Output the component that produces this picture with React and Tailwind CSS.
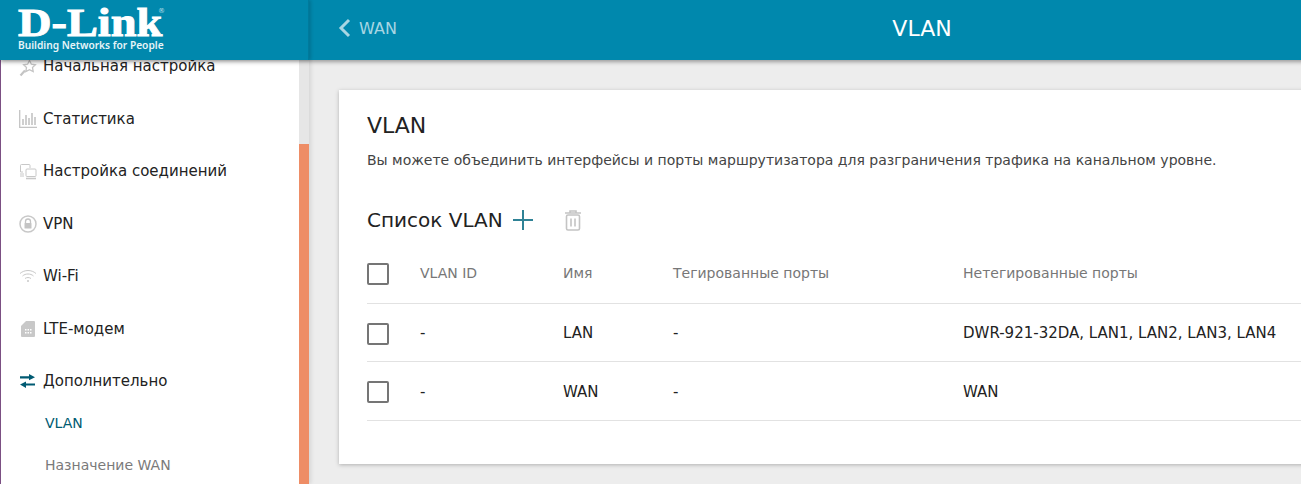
import React from 'react';

const font = { fontFamily: '"DejaVu Sans", sans-serif' };

const StarIcon = () => (
  <svg width="18" height="18" viewBox="0 -2 18 18" fill="none" stroke="#c4c4c4" strokeWidth="1.3" overflow="visible">
    <path d="M10.5 1.5l1.9 3.700 4 .6-2.900 2.800.7 4-3.700-1.900-3.700 1.900.7-4-2.900-2.800 4-.6z" />
    <path d="M6 11.500L1.500 16.500" strokeWidth="2.2" />
  </svg>
);

const StatsIcon = () => (
  <svg width="18" height="18" viewBox="0 0 18 18" fill="none" stroke="#c4c4c4">
    <path d="M.7 0v17.300H18" strokeWidth="1.3" />
    <path d="M4 15V9M7 15V5M10 15V8M13 15V3M16 15V7" strokeWidth="1.6" />
  </svg>
);

const ConnIcon = () => (
  <svg width="18" height="18" viewBox="0 0 18 18" fill="none" stroke="#c8c8c8" strokeWidth="1">
    <path d="M4 10H1.500V3.500a1 1 0 0 1 1-1H10a1 1 0 0 1 1 1V6" />
    <path d="M1 12h4M1 14h4" />
    <rect x="7" y="7" width="10" height="7.500" rx="1" />
    <path d="M7 16.500h10" strokeWidth="1.6" />
  </svg>
);

const VpnIcon = () => (
  <svg width="18" height="18" viewBox="0 0 18 18" fill="none">
    <circle cx="9" cy="9" r="8" stroke="#c8c8c8" strokeWidth="1.5" />
    <path d="M6.500 8V6.500a2.500 2.500 0 0 1 5 0V8" stroke="#c4c4c4" strokeWidth="1.3" />
    <rect x="5.500" y="8" width="7" height="5.500" rx=".6" fill="#c4c4c4" />
  </svg>
);

const WifiIcon = () => (
  <svg width="18" height="14" viewBox="0 0 18 14" fill="none" stroke="#c8c8c8" strokeWidth="1">
    <path d="M1 4.500c4.500-4 11.500-4 16 0" />
    <path d="M3.500 7c3-2.700 8-2.700 11 0" />
    <path d="M6 9.500c1.700-1.300 4.300-1.300 6 0" />
    <circle cx="9" cy="12" r="1" fill="#c8c8c8" stroke="none" />
  </svg>
);

const SimIcon = () => (
  <svg width="14" height="16" viewBox="0 0 14 16">
    <path d="M5 0h8a1 1 0 0 1 1 1v14a1 1 0 0 1-1 1H1a1 1 0 0 1-1-1V5z" fill="#c8c8c8" />
    <path d="M4 8h1.500v1.500H4zM6.500 8H8v1.500H6.500zM9 8h1.500v1.500H9zM4 11h1.500v1.500H4zM6.500 11H8v1.500H6.500zM9 11h1.500v1.500H9z" fill="#fff" />
  </svg>
);

const ArrowsIcon = () => (
  <svg width="15" height="14" viewBox="0 0 15 14" fill="#005a72">
    <path d="M0 2.200h9V0l6 3.300-6 3V4.400H0z" />
    <path d="M15 9.400H6V7.400L0 10.600 6 14v-2.400h9z" />
  </svg>
);

const menu = [
  { label: 'Начальная настройка', icon: <StarIcon /> },
  { label: 'Статистика', icon: <StatsIcon /> },
  { label: 'Настройка соединений', icon: <ConnIcon /> },
  { label: 'VPN', icon: <VpnIcon /> },
  { label: 'Wi-Fi', icon: <WifiIcon /> },
  { label: 'LTE-модем', icon: <SimIcon /> },
  { label: 'Дополнительно', icon: <ArrowsIcon /> },
];

const rows = [
  { name: 'LAN', untagged: 'DWR-921-32DA, LAN1, LAN2, LAN3, LAN4' },
  { name: 'WAN', untagged: 'WAN' },
];

const Checkbox = () => (
  <span className="block w-[22px] h-[22px] rounded-[2px] border-2 border-[#757575] bg-white" />
);

const App = () => {
  return (
    <div className="relative w-[1301px] h-[484px] overflow-hidden bg-[#ededed]" style={font}>
      <header className="relative z-10 flex w-[1535px] h-[60px] bg-[#0088ad] text-white shadow-[0_2px_4px_rgba(0,0,0,0.35)]">
        <div className="w-[309px] shrink-0 pl-[18px] pt-[6px] border-r border-[#007a9c] shadow-[2px_0_3px_rgba(0,0,0,0.15)]">
          <div className="relative w-[150px]">
            <div
              className="text-[41px] leading-[33px] font-bold origin-left scale-x-[1.13] [-webkit-text-stroke:1px_white]"
              style={{ fontFamily: '"Liberation Serif", serif' }}
            >
              D-Link
            </div>
            <span className="absolute left-[140px] top-[2px] text-[7px] leading-none text-[#b9dfe9]">®</span>
            <div
              className="text-[10.200px] leading-[13px] font-semibold text-[#e6f4f8] whitespace-nowrap"
              style={{ fontFamily: '"Noto Sans", sans-serif' }}
            >
              Building Networks for People
            </div>
          </div>
        </div>
        <div className="flex-1 relative flex items-center justify-center">
          <div className="absolute left-[29px] top-0 h-[56px] flex items-center gap-[8px] text-[#a8d6e3]">
            <svg width="13" height="20" viewBox="0 0 13 20" fill="none" stroke="#a8d6e3" strokeWidth="3">
              <path d="M11 2L3 10l8 8" />
            </svg>
            <span className="text-[16px] pt-[1px]">WAN</span>
          </div>
          <h1 className="text-[22px] font-normal pb-[4px]">VLAN</h1>
        </div>
      </header>

      <div className="flex h-[424px]">
        <aside className="w-[309px] shrink-0 flex bg-white border-l border-[#7b4f83] shadow-[2px_0_4px_rgba(0,0,0,0.1)]">
          <nav className="flex-1 overflow-hidden">
            <ul className="-mt-[20px]">
              {menu.map((item) => (
                <li key={item.label} className="flex items-center h-[52.500px] text-[15px] text-[#222]">
                  <span className="w-[42px] shrink-0 flex justify-center pl-[12px] pr-[1px]">{item.icon}</span>
                  {item.label}
                </li>
              ))}
            </ul>
            <div className="-mt-[1px] pl-[44px] text-[14px] text-[#005a72] h-[42px] leading-[32px]">VLAN</div>
            <div className="pl-[44px] text-[14px] text-[#7a7a7a] leading-[32px]">Назначение WAN</div>
          </nav>
          <div className="w-[10px] bg-[#e6e6e6] pt-[84px]">
            <div className="h-[340px] bg-[#ee8d66]" />
          </div>
        </aside>

        <main className="flex-1 pl-[30px] pt-[30px] overflow-hidden">
          <section className="w-[1000px] h-[374px] bg-white pl-[28px] pt-[21px] shadow-[0_1px_4px_rgba(0,0,0,0.25)]">
            <h2 className="text-[22px] leading-[30px] text-[#222]">VLAN</h2>
            <p className="mt-[10px] text-[14px] leading-[18px] text-[#444] whitespace-nowrap">
              Вы можете объединить интерфейсы и порты маршрутизатора для разграничения трафика на канальном уровне.
            </p>
            <div className="mt-[33px] flex items-center h-[36px]">
              <h3 className="text-[20px] text-[#222] font-normal">Список VLAN</h3>
              <svg className="ml-[10px]" width="20" height="20" viewBox="0 0 20 20" stroke="#2f8296" strokeWidth="2">
                <path d="M10 0v20M0 10h20" />
              </svg>
              <svg className="ml-[31px] -mt-[1px]" width="18" height="22" viewBox="0 0 18 22" fill="none" stroke="#c4c4c4" strokeWidth="1.600">
                <path d="M1 4h16M6 4V2h6v2" />
                <rect x="2.500" y="6" width="13" height="15" rx="1.500" />
                <path d="M7 9.500v8M11 9.500v8" />
              </svg>
            </div>
            <table className="mt-[7px] w-[934px] table-fixed text-left">
              <thead>
                <tr className="h-[58px] border-b border-[#e2e2e2] text-[14px] text-[#777]">
                  <th className="w-[53px] font-normal"><Checkbox /></th>
                  <th className="w-[143px] font-normal">VLAN ID</th>
                  <th className="w-[110px] font-normal">Имя</th>
                  <th className="w-[290px] font-normal">Тегированные порты</th>
                  <th className="font-normal">Нетегированные порты</th>
                </tr>
              </thead>
              <tbody>
                {rows.map((row) => (
                  <tr key={row.name} className="h-[58.500px] border-b border-[#e2e2e2] text-[15px] text-[#222]">
                    <td className="pt-[3px]"><Checkbox /></td>
                    <td className="pt-[2px]">-</td>
                    <td className="pt-[2px]">{row.name}</td>
                    <td className="pt-[2px]">-</td>
                    <td className="pt-[2px]">{row.untagged}</td>
                  </tr>
                ))}
              </tbody>
            </table>
          </section>
        </main>
      </div>
    </div>
  );
};

export default App;
